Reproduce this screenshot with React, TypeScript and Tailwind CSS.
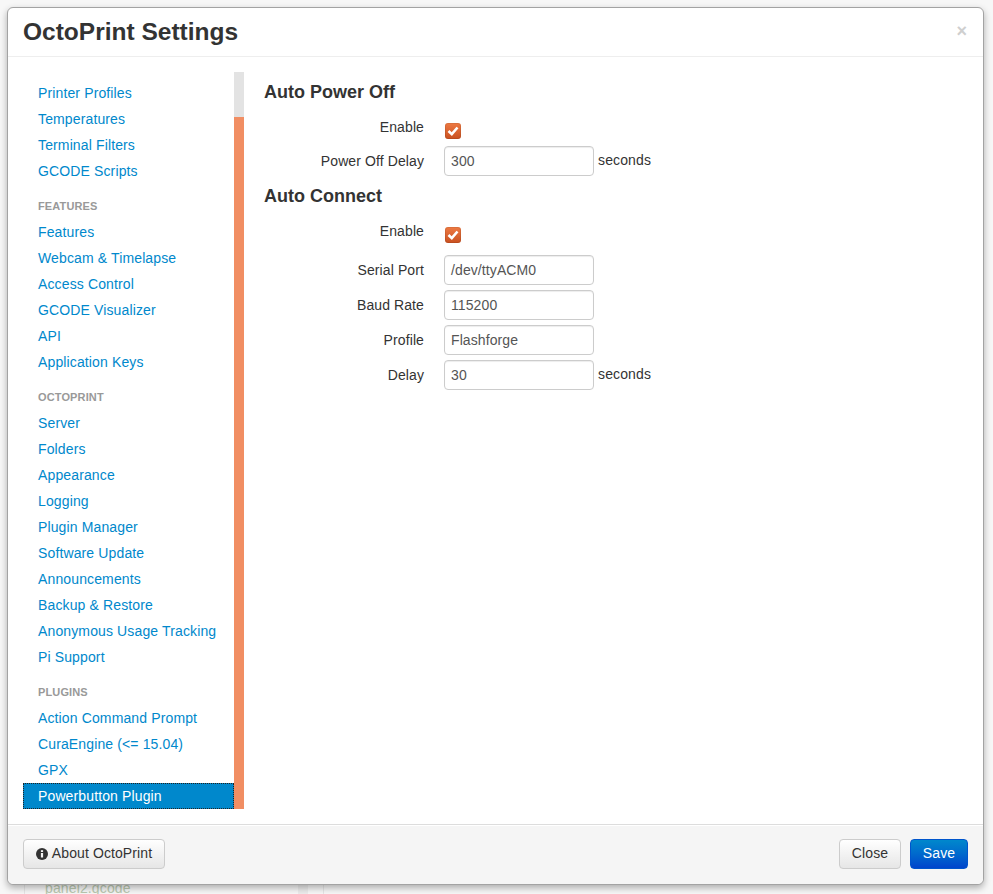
import React from "react";

const groups: { title?: string; items: string[] }[] = [
  { items: ["Printer Profiles", "Temperatures", "Terminal Filters", "GCODE Scripts"] },
  { title: "FEATURES", items: ["Features", "Webcam & Timelapse", "Access Control", "GCODE Visualizer", "API", "Application Keys"] },
  { title: "OCTOPRINT", items: ["Server", "Folders", "Appearance", "Logging", "Plugin Manager", "Software Update", "Announcements", "Backup & Restore", "Anonymous Usage Tracking", "Pi Support"] },
  { title: "PLUGINS", items: ["Action Command Prompt", "CuraEngine (<= 15.04)", "GPX"] },
];

function Check() {
  return (
    <span className="ml-px mt-2 flex h-4 w-4 items-center justify-center rounded-[3px] bg-gradient-to-b from-[#ee7a43] to-[#c9501f] shadow-[inset_0_0_0_1px_rgba(0,0,0,0.08)]">
      <svg width="14" height="14" viewBox="0 0 14 14">
        <path d="M2.5 7 L5.8 10.2 L11.5 3.5" fill="none" stroke="#fff" strokeWidth="2.6" />
      </svg>
    </span>
  );
}

function Row({ label, value, unit, mb = "mb-[5px]" }: { label: string; value: string; unit?: string; mb?: string }) {
  return (
    <div className={`flex items-center ${mb}`}>
      <label className="w-[160px] text-right text-[14px] leading-5 tracking-[0.1px] text-[#333]">{label}</label>
      <div className="ml-5 flex h-[30px] w-[150px] items-center rounded border border-[#ccc] bg-white px-[6px] text-[14px] tracking-[0.1px] text-[#555] shadow-[inset_0_1px_1px_rgba(0,0,0,0.075)]">{value}</div>
      {unit && <span className="ml-1 pb-[2px] text-[14px] leading-5 tracking-[0.13px] text-[#333]">{unit}</span>}
    </div>
  );
}

function EnableRow() {
  return (
    <div className="flex h-5 items-center">
      <label className="w-[160px] text-right text-[14px] leading-5 tracking-[0.1px] text-[#333]">Enable</label>
      <div className="ml-5 flex items-center"><Check /></div>
    </div>
  );
}

export default function App() {
  return (
    <div className="relative h-[894px] w-[993px] overflow-hidden bg-[#f7f7f7] font-['Liberation_Sans',Arial,sans-serif]">
      <div className="absolute left-[24px] top-[860px] h-[34px] w-px bg-[#e6e6e6]" />
      <div className="absolute left-[298px] top-[860px] h-[34px] w-[10px] bg-[#ececec]" />
      <div className="absolute left-[323px] top-[860px] h-[34px] w-px bg-[#e6e6e6]" />
      <div className="absolute left-[45px] top-[878px] text-[14px] leading-5 tracking-[0.13px] text-[#b9c9b0]">panel2.gcode</div>
      <div className="relative ml-[7px] mt-[7px] flex h-[878px] w-[977px] flex-col rounded-md border border-[#a3a3a3] bg-white shadow-[0_3px_7px_rgba(0,0,0,0.3)]">
        <div className="relative flex h-[49px] items-center border-b border-[#eee] pl-[15px]">
          <h3 className="text-[24.5px] font-bold leading-[30px] text-[#333]">OctoPrint Settings</h3>
          <span className="absolute right-[16px] top-[13px] text-[18px] font-bold leading-5 text-[#cfcfcf]">×</span>
        </div>
        <div className="flex min-h-0 flex-1 pl-[15px] pt-[15px]">
          <div className="flex h-[737px] w-[221px] shrink-0 overflow-hidden">
            <div className="w-[211px] pt-2 text-[14px] tracking-[0.13px]">
              {groups.map((g, i) => (
                <div key={i}>
                  {g.title && <div className="mb-[3px] mt-[12px] h-[20px] pl-[15px] text-[11px] font-bold leading-5 text-[#999]">{g.title}</div>}
                  {g.items.map((t) => (
                    <div key={t} className="h-[26px] pl-[15px] pt-[3px] leading-5 text-[#0088cc]">{t}</div>
                  ))}
                </div>
              ))}
              <div className="h-[26px] border border-dotted border-[#222] bg-[#0088cc] pl-[14px] pt-[2px] leading-5 text-white">Powerbutton Plugin</div>
            </div>
            <div className="flex w-[10px] flex-col">
              <div className="h-[45px] bg-[#e3e3e3]" />
              <div className="flex-1 bg-[#f18e63]" />
            </div>
          </div>
          <div className="flex-1 pl-5">
            <h4 className="mb-[15px] mt-[10px] text-[18px] font-bold leading-5 text-[#333]">Auto Power Off</h4>
            <EnableRow />
            <div className="h-[9px]" />
            <Row label="Power Off Delay" value="300" unit="seconds" mb="mb-0" />
            <h4 className="mb-[15px] mt-[10px] text-[18px] font-bold leading-5 text-[#333]">Auto Connect</h4>
            <EnableRow />
            <div className="h-[14px]" />
            <Row label="Serial Port" value="/dev/ttyACM0" />
            <Row label="Baud Rate" value="115200" />
            <Row label="Profile" value="Flashforge" />
            <Row label="Delay" value="30" unit="seconds" />
          </div>
        </div>
        <div className="flex h-[60px] items-center justify-between rounded-b-md border-t border-[#ddd] bg-[#f5f5f5] px-[15px] pb-[2px] shadow-[inset_0_1px_0_#fff]">
          <button className="flex h-[30px] w-[142px] items-center justify-center gap-1 rounded border border-[#ccc] bg-gradient-to-b from-white to-[#e6e6e6] text-[14px] tracking-[0.1px] text-[#333]">
            <svg width="12" height="12" viewBox="0 0 12 12"><circle cx="6" cy="6" r="6" fill="#333" /><rect x="4.9" y="5" width="2.2" height="4.5" fill="#f5f5f5" /><rect x="4.9" y="2.2" width="2.2" height="1.8" fill="#f5f5f5" /></svg>
            About OctoPrint
          </button>
          <div className="flex gap-[9px]">
            <button className="h-[30px] w-[62px] rounded border border-[#ccc] bg-gradient-to-b from-white to-[#e6e6e6] text-[14px] tracking-[0.13px] text-[#333]">Close</button>
            <button className="h-[30px] w-[58px] rounded border border-[#0055cc] bg-gradient-to-b from-[#0088cc] to-[#0044cc] text-[14px] tracking-[0.13px] text-white">Save</button>
          </div>
        </div>
      </div>
    </div>
  );
}
